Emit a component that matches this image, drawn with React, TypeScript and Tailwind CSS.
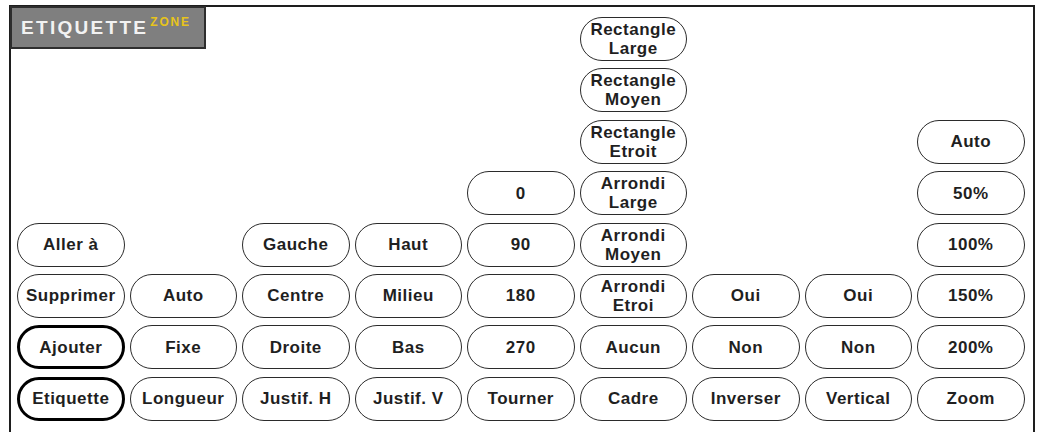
import React from "react";

type Btn = { label: string[]; col: number; row: number; bold?: boolean };

const colClass: Record<number, string> = {
  1: "col-start-1",
  2: "col-start-2",
  3: "col-start-3",
  4: "col-start-4",
  5: "col-start-5",
  6: "col-start-6",
  7: "col-start-7",
  8: "col-start-8",
  9: "col-start-9",
};

const rowClass: Record<number, string> = {
  1: "row-start-1",
  2: "row-start-2",
  3: "row-start-3",
  4: "row-start-4",
  5: "row-start-5",
  6: "row-start-6",
  7: "row-start-7",
  8: "row-start-8",
};

const buttons: Btn[] = [
  // colonne 1
  { label: ["Aller à"], col: 1, row: 5 },
  { label: ["Supprimer"], col: 1, row: 6 },
  { label: ["Ajouter"], col: 1, row: 7, bold: true },
  { label: ["Etiquette"], col: 1, row: 8, bold: true },
  // colonne 2
  { label: ["Auto"], col: 2, row: 6 },
  { label: ["Fixe"], col: 2, row: 7 },
  { label: ["Longueur"], col: 2, row: 8 },
  // colonne 3
  { label: ["Gauche"], col: 3, row: 5 },
  { label: ["Centre"], col: 3, row: 6 },
  { label: ["Droite"], col: 3, row: 7 },
  { label: ["Justif. H"], col: 3, row: 8 },
  // colonne 4
  { label: ["Haut"], col: 4, row: 5 },
  { label: ["Milieu"], col: 4, row: 6 },
  { label: ["Bas"], col: 4, row: 7 },
  { label: ["Justif. V"], col: 4, row: 8 },
  // colonne 5
  { label: ["0"], col: 5, row: 4 },
  { label: ["90"], col: 5, row: 5 },
  { label: ["180"], col: 5, row: 6 },
  { label: ["270"], col: 5, row: 7 },
  { label: ["Tourner"], col: 5, row: 8 },
  // colonne 6
  { label: ["Rectangle", "Large"], col: 6, row: 1 },
  { label: ["Rectangle", "Moyen"], col: 6, row: 2 },
  { label: ["Rectangle", "Etroit"], col: 6, row: 3 },
  { label: ["Arrondi", "Large"], col: 6, row: 4 },
  { label: ["Arrondi", "Moyen"], col: 6, row: 5 },
  { label: ["Arrondi", "Etroi"], col: 6, row: 6 },
  { label: ["Aucun"], col: 6, row: 7 },
  { label: ["Cadre"], col: 6, row: 8 },
  // colonne 7
  { label: ["Oui"], col: 7, row: 6 },
  { label: ["Non"], col: 7, row: 7 },
  { label: ["Inverser"], col: 7, row: 8 },
  // colonne 8
  { label: ["Oui"], col: 8, row: 6 },
  { label: ["Non"], col: 8, row: 7 },
  { label: ["Vertical"], col: 8, row: 8 },
  // colonne 9
  { label: ["Auto"], col: 9, row: 3 },
  { label: ["50%"], col: 9, row: 4 },
  { label: ["100%"], col: 9, row: 5 },
  { label: ["150%"], col: 9, row: 6 },
  { label: ["200%"], col: 9, row: 7 },
  { label: ["Zoom"], col: 9, row: 8 },
];

export default function App() {
  return (
    <div className="w-[1037px] h-[432px] overflow-hidden bg-white pl-[9px] pt-[5px] font-['Liberation_Sans',Arial,sans-serif]">
      {/* Cadre principal */}
      <div className="relative w-[1026px] h-[450px] border-2 border-[#1e1e1e]">
        {/* Logo */}
        <div className="absolute -top-[1px] -left-[1px] w-[196px] h-[43px] bg-[#7f7f7f] border-2 border-[#2e2e2e] flex items-start pl-[9px] pt-[9px]">
          <span className="text-[19px] leading-[22px] font-bold text-[#f2f2f2] tracking-[2.3px]">ETIQUETTE</span>
          <span className="text-[12px] leading-none font-bold text-[#e8c41a] tracking-[1.8px] -mt-[1px] ml-[2px]">ZONE</span>
        </div>

        {/* Grille des boutons */}
        <div className="grid grid-cols-[repeat(9,107.5px)] grid-rows-[repeat(8,44px)] gap-x-[5px] gap-y-[7.4px] pl-[6px] pt-[10px]">
          {buttons.map((b, i) => (
            <div
              key={i}
              className={`${colClass[b.col]} ${rowClass[b.row]} flex flex-col items-center justify-center rounded-full bg-white text-[#1f1f1f] font-bold text-[17px] leading-[19px] tracking-[0.5px] ${
                b.bold ? "border-[3px] border-black" : "border-[1.5px] border-[#2b2b2b]"
              }`}
            >
              {b.label.map((l, j) => (
                <span key={j} className="whitespace-nowrap">
                  {l}
                </span>
              ))}
            </div>
          ))}
        </div>
      </div>
    </div>
  );
}
